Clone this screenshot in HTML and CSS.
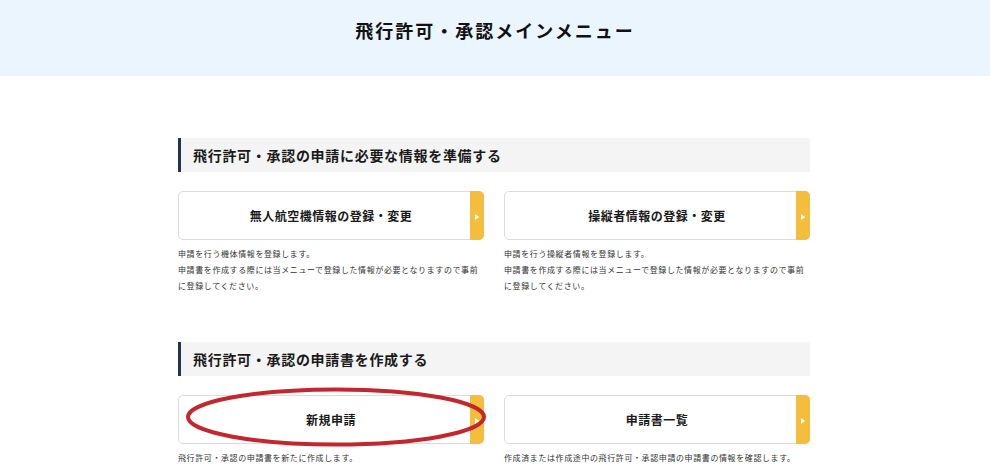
FILE: index.html
```html
<!DOCTYPE html>
<html>
    <head>
        <title>飛行許可・承認メインメニュー</title>
        <meta charset="utf-8" />
        <link rel="stylesheet" href="styles.css">
    </head>
    <body>
        <header class="page-head">
            <h1>飛行許可・承認メインメニュー</h1>
        </header>
        <main class="menu">
            <section class="group">
                <h2>飛行許可・承認の申請に必要な情報を準備する</h2>
                <div class="cards">
                    <div class="item">
                        <a class="card" href="#"><span>無人航空機情報の登録・変更</span></a>
                        <p>申請を行う機体情報を登録します。<br>申請書を作成する際には当メニューで登録した情報が必要となりますので事前に登録してください。</p>
                    </div>
                    <div class="item">
                        <a class="card" href="#"><span>操縦者情報の登録・変更</span></a>
                        <p>申請を行う操縦者情報を登録します。<br>申請書を作成する際には当メニューで登録した情報が必要となりますので事前に登録してください。</p>
                    </div>
                </div>
            </section>
            <section class="group">
                <h2>飛行許可・承認の申請書を作成する</h2>
                <div class="cards">
                    <div class="item">
                        <a class="card" href="#"><span>新規申請</span></a>
                        <p>飛行許可・承認の申請書を新たに作成します。</p>
                        <!-- 赤丸の注記 -->
                        <svg class="mark" width="304" height="62" viewBox="0 0 304 62">
                            <ellipse cx="152" cy="31" rx="148" ry="27.5" fill="none" stroke="#c1272d" stroke-width="4"/>
                        </svg>
                    </div>
                    <div class="item">
                        <a class="card" href="#"><span>申請書一覧</span></a>
                        <p>作成済または作成途中の飛行許可・承認申請の申請書の情報を確認します。</p>
                    </div>
                </div>
            </section>
        </main>
    </body>
</html>
```

FILE: styles.css
```css
* {
    margin: 0;
    padding: 0;
    box-sizing: border-box;
}
html, body {
    height: 100%;
    overflow: hidden;
}
body {
    font-family: "Noto Sans CJK JP", "Noto Sans", sans-serif;
    color: #222;
    background: #fff;
}
.page-head {
    height: 76px;
    background: #eaf5fd;
    padding-top: 17px;
}
.page-head h1 {
    text-align: center;
    font-size: 18px;
    line-height: 26px;
    letter-spacing: 2px;
    font-weight: 700;
    color: #111;
}
.menu {
    width: 632px;
    margin: 62px auto 0;
    position: relative;
    left: -1px;
}
.group {
    margin-bottom: 48px;
}
.group h2 {
    height: 34px;
    line-height: 34px;
    background: #f4f4f4;
    border-left: 3px solid #1f3550;
    padding-left: 12px;
    font-size: 14px;
    letter-spacing: 0.7px;
    font-weight: 700;
    color: #1a1a1a;
}
.cards {
    display: grid;
    grid-template-columns: 306px 306px;
    column-gap: 20px;
    margin-top: 19px;
}
.item {
    position: relative;
}
.card {
    display: flex;
    align-items: center;
    justify-content: center;
    height: 49px;
    border: 1px solid #dcdcdc;
    border-radius: 5px;
    background: #fff;
    text-decoration: none;
    color: #1a1a1a;
    font-size: 12px;
    font-weight: 700;
    letter-spacing: 0.5px;
    position: relative;
}
.card::after {
    content: "";
    position: absolute;
    top: -1px;
    right: -1px;
    bottom: -1px;
    width: 14px;
    background: #f5bd3c;
    border-radius: 0 5px 5px 0;
}
.card::before {
    content: "";
    position: absolute;
    right: 4px;
    top: 22px;
    z-index: 1;
    border-left: 4px solid #fff;
    border-top: 3px solid transparent;
    border-bottom: 3px solid transparent;
}
.item p {
    margin-top: 6px;
    font-size: 8px;
    line-height: 16px;
    letter-spacing: 0.6px;
    color: #333;
}
.mark {
    position: absolute;
    left: 6px;
    top: -9px;
}
```
